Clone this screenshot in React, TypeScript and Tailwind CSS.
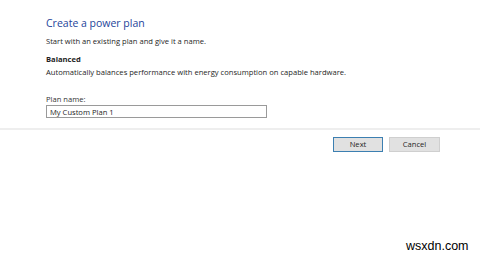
import React from 'react';

// Windows "Create a power plan" dialog page
export default function App() {
  return (
    <div
      className="w-[480px] h-[259px] bg-white relative overflow-hidden text-[#1e1e1e]"
      style={{ fontFamily: '"Open Sans", "Noto Sans", sans-serif' }}
    >
      <div className="pl-[46px] pt-[16px]">
        <h1 className="text-[10.5px] leading-[15px] text-[#24449a]">Create a power plan</h1>
        <p className="mt-[5px] text-[7.6px] leading-[10px]">Start with an existing plan and give it a name.</p>

        <div className="mt-[8px]">
          <div className="text-[7.6px] leading-[10px] font-bold">Balanced</div>
          <div className="mt-[3px] text-[7.6px] leading-[10px]">
            Automatically balances performance with energy consumption on capable hardware.
          </div>
        </div>

        <div className="mt-[17px]">
          <label className="block text-[7.6px] leading-[10px] text-[#333]">Plan name:</label>
          <input
            readOnly
            value="My Custom Plan 1"
            className="mt-[1px] block w-[221px] h-[13px] border border-[#9a9a9a] px-[3px] text-[7.6px] text-[#1e1e1e] outline-none"
          />
        </div>
      </div>

      <div className="mt-[10px] h-[2px] bg-[#eeeeee]" />

      <div className="flex justify-end gap-[6px] pr-[40px] pt-[7px]">
        <button className="w-[50px] h-[15px] bg-[#e1e1e1] border border-[#3c7fb1] text-[7.6px] leading-none">
          Next
        </button>
        <button className="w-[51px] h-[15px] bg-[#e1e1e1] border border-[#cfcfcf] text-[7.6px] leading-none">
          Cancel
        </button>
      </div>

      <div
        className="absolute left-[406px] top-[239px] text-[12.5px] leading-[14px] text-black"
        style={{ fontFamily: '"Liberation Sans", Arial, sans-serif' }}
      >
        wsxdn.com
      </div>
    </div>
  );
}
